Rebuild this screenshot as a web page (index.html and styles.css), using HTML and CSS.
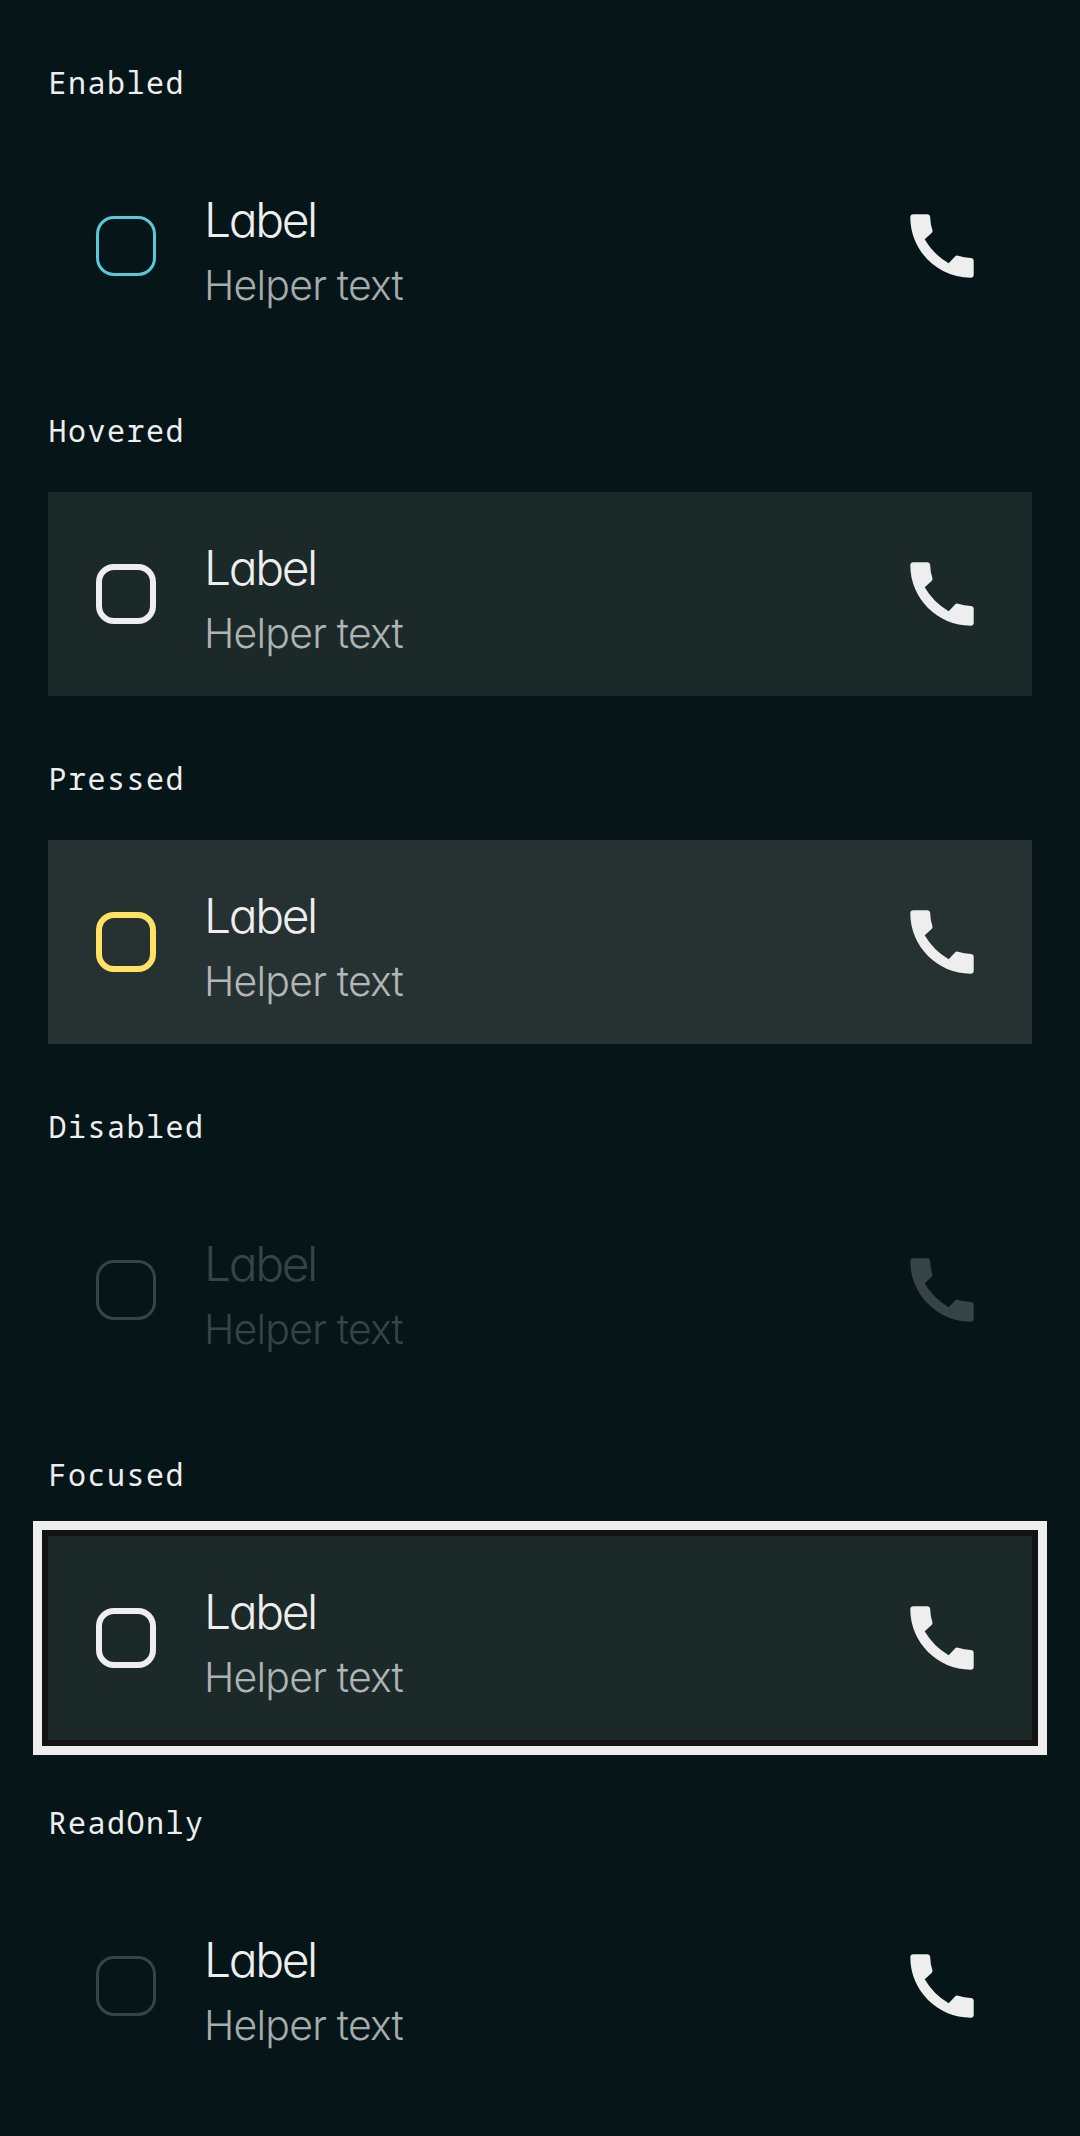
FILE: index.html
```html
<!DOCTYPE html>
<html lang="en">
<head>
<meta charset="utf-8">
<title>Checkbox states</title>
<link rel="stylesheet" href="styles.css">
</head>
<body>
<svg class="defs" width="0" height="0" aria-hidden="true">
  <symbol id="phone" viewBox="0 0 84 84">
    <path d="M13.3 10.3H27Q30 10.3 30.2 13.3Q30.3 20 32.4 26Q32.9 28 31.6 29L24.7 35.3Q33.5 50.5 48.7 59.3L54.8 52.8Q56 51.2 58 51.7Q64 53.8 70.7 53.9Q73.7 54 73.7 57V70.7Q73.7 73.7 70.7 73.7C37.5 73.7 10.3 46.5 10.3 13.3Q10.3 10.3 13.3 10.3Z"/>
  </symbol>
</svg>
<main class="states">
  <section class="state">
    <h2 class="state-name">Enabled</h2>
    <div class="row enabled"><span class="box"></span><div class="texts"><div class="label">Label</div><div class="helper">Helper text</div></div><svg class="icon"><use href="#phone"/></svg></div>
  </section>
  <section class="state">
    <h2 class="state-name">Hovered</h2>
    <div class="row hovered"><span class="box"></span><div class="texts"><div class="label">Label</div><div class="helper">Helper text</div></div><svg class="icon"><use href="#phone"/></svg></div>
  </section>
  <section class="state">
    <h2 class="state-name">Pressed</h2>
    <div class="row pressed"><span class="box"></span><div class="texts"><div class="label">Label</div><div class="helper">Helper text</div></div><svg class="icon"><use href="#phone"/></svg></div>
  </section>
  <section class="state">
    <h2 class="state-name">Disabled</h2>
    <div class="row disabled"><span class="box"></span><div class="texts"><div class="label">Label</div><div class="helper">Helper text</div></div><svg class="icon"><use href="#phone"/></svg></div>
  </section>
  <section class="state">
    <h2 class="state-name">Focused</h2>
    <div class="row focused"><span class="box"></span><div class="texts"><div class="label">Label</div><div class="helper">Helper text</div></div><svg class="icon"><use href="#phone"/></svg></div>
  </section>
  <section class="state">
    <h2 class="state-name">ReadOnly</h2>
    <div class="row readonly"><span class="box"></span><div class="texts"><div class="label">Label</div><div class="helper">Helper text</div></div><svg class="icon"><use href="#phone"/></svg></div>
  </section>
</main>
</body>
</html>
```
FILE: styles.css
```css
* { box-sizing: border-box; }
body {
  margin: 0;
  background: #051518;
  color: #eee;
}
.defs { display: none; }
.states {
  display: flex;
  flex-direction: column;
  gap: 48px;
  padding: 48px;
}
.state-name {
  margin: 0;
  height: 96px;
  padding: 11px 0 0 0.5px;
  font: 400 30px/48px "Noto Sans Mono", "Liberation Mono", monospace;
  letter-spacing: 1.5px;
}
.row {
  display: flex;
  align-items: center;
  height: 204px;
  padding: 0 48px;
}
.box {
  width: 60px;
  height: 60px;
  border: 3px solid #5ac8d8;
  border-radius: 18px;
}
.texts {
  flex: 1;
  padding: 7px 0 0 48px;
  font-family: Inter, sans-serif;
  font-weight: 300;
  font-feature-settings: "cv11";
}
.label {
  font-size: 48px;
  line-height: 72px;
  letter-spacing: -2.4px;
}
.helper {
  font-size: 41px;
  line-height: 59px;
  letter-spacing: -0.8px;
  color: #a6abab;
}
.icon {
  width: 84px;
  height: 84px;
  fill: #eee;
}
.hovered, .focused { background: #1c2929; }
.hovered .box, .focused .box { border: 6px solid #eee; }
.hovered .helper, .focused .helper { color: #aeb3b3; }
.pressed { background: #263232; }
.pressed .box { border: 6px solid #ffe164; }
.pressed .helper { color: #b2b6b6; }
.disabled, .disabled .helper { color: #364445; }
.disabled .icon { fill: #364445; }
.disabled .box, .readonly .box { border-color: #364445; }
.focused { box-shadow: 0 0 0 6px #141414, 0 0 0 15px #eee; }
```
